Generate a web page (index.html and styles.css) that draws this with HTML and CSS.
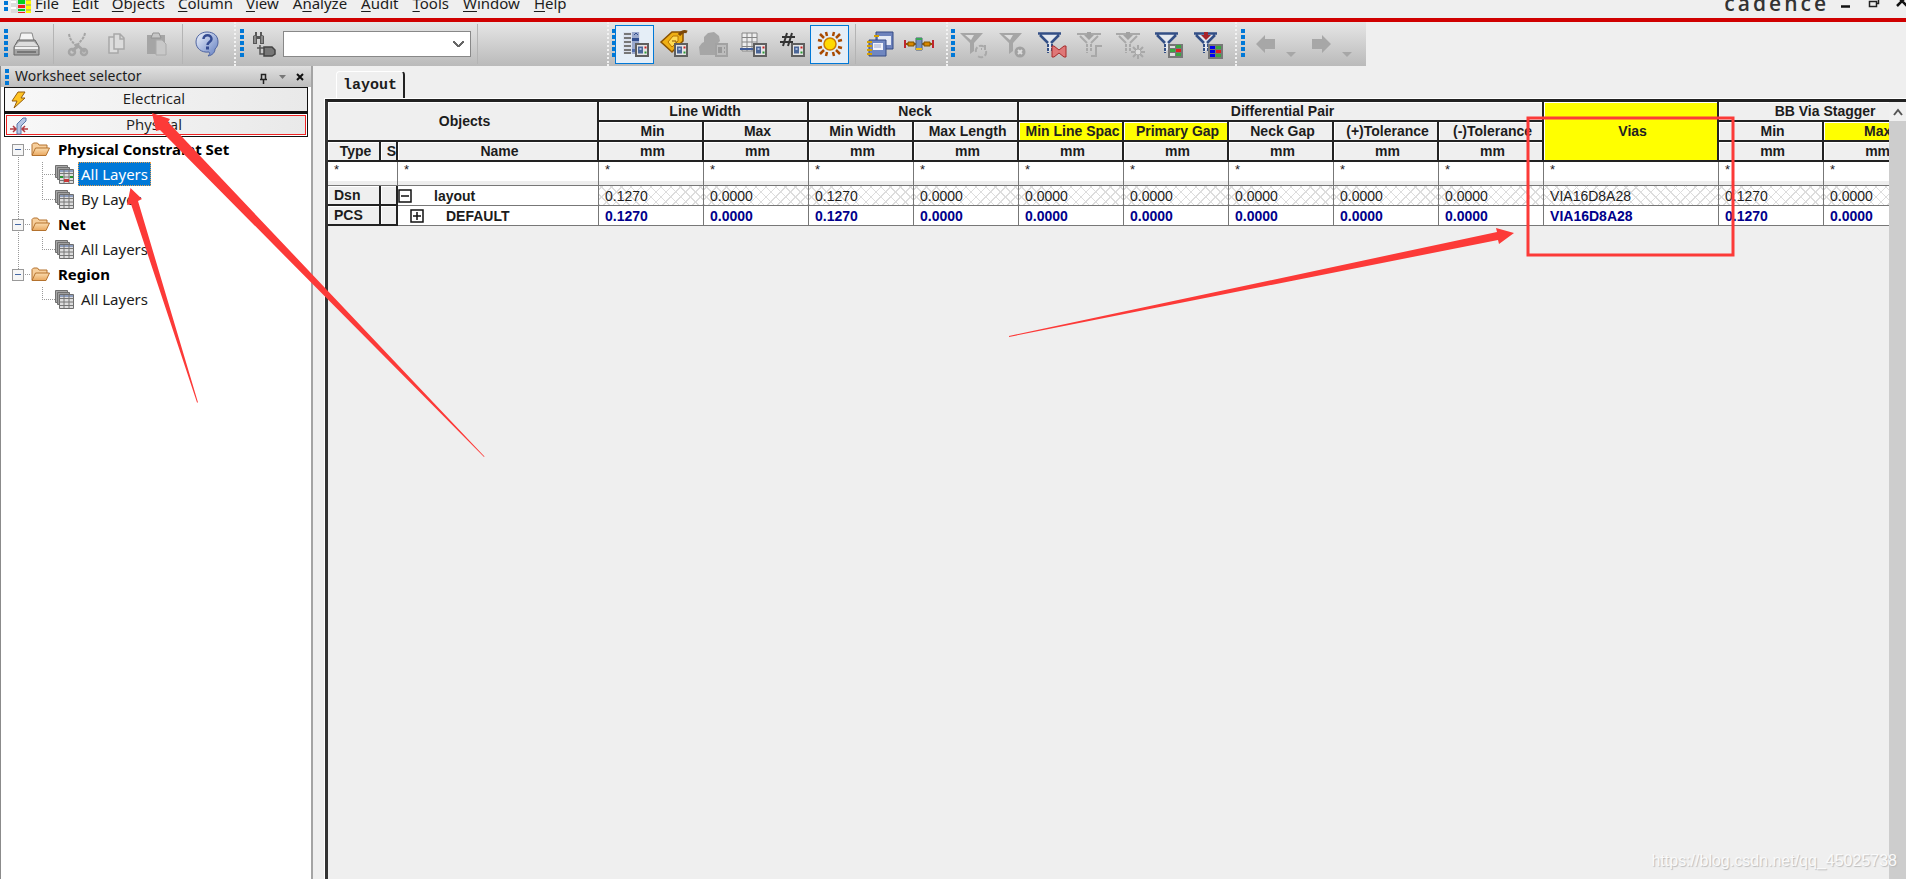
FILE: index.html
```html
<!DOCTYPE html>
<html lang="en">
<head>
<meta charset="utf-8">
<title>Constraint Manager</title>
<link rel="stylesheet" href="styles.css">
</head>
<body>
<svg class="defs" aria-hidden="true">
  <defs>
    <linearGradient id="sheetBlue" x1="0" y1="0" x2="1" y2="1"><stop offset="0" stop-color="#f3f6fd"/><stop offset="1" stop-color="#5f7cc0"/></linearGradient>
    <linearGradient id="folderFill" x1="0" y1="0" x2="0" y2="1"><stop offset="0" stop-color="#fbdcae"/><stop offset="1" stop-color="#e9a860"/></linearGradient>
    <symbol id="folder" viewBox="0 0 19 15"><path d="M1 13V2.500l1.500-1.500h4l1.500 2h8v3" fill="#f7cf9c" stroke="#b4722e"/><path d="M1 13.500L4.500 6h14L15 13.500z" fill="url(#folderFill)" stroke="#b4722e"/></symbol>
    <symbol id="sheets" viewBox="0 0 19 19"><path d="M.5.5h12v12H.5z" fill="#a8a8a8" stroke="#707070"/><path d="M2.500 2.500h12v12h-12z" fill="#a0a0a0" stroke="#707070"/><path d="M4.500 4.500h14v14h-14z" fill="#ddd" stroke="#6d6d6d"/><path d="M5 5h13v2H5z" fill="#8d9dbd"/><path d="M4.500 8.500h14m-14 3.500h14m-14 3.500h14M9 5v13M14 5v13" stroke="#777" fill="none"/></symbol>
    <symbol id="badge" viewBox="0 0 14 14"><path d="M1 1h12v12H1z" fill="#e4e4e4" stroke="#5f5f5f" stroke-width="2"/><path d="M3 3.500h5v7H3z" fill="#4b6799"/><path d="M4.500 5h2v2h-2z" fill="#a9bbdc"/><path d="M9.500 3.500h2v2h-2z" fill="#c22"/><path d="M9.500 8.500h2v2h-2z" fill="#2b9b35"/></symbol>
    <symbol id="funnel" viewBox="0 0 24 22"><path d="M0 1h23L14 11v8l-4 3V11z" fill="#a6a6a6"/><path d="M5 3h9l-3 5z" fill="#dedede"/></symbol>
    <symbol id="funnelBlue" viewBox="0 0 24 22"><path d="M1.500 1.500h21l-8.500 9v6l-4 4v-10z" fill="#e4e8ef"/><path d="M0 1.500h23M2 3l8 8M21 3l-8 8" stroke="#334f86" stroke-width="2.500" fill="none"/><path d="M10 12v9m4-9v7" stroke="#334f86" stroke-width="2" stroke-dasharray="3 1"/></symbol>
    <symbol id="funnelPale" viewBox="0 0 24 22"><path d="M0 2h24M3 4l7 7M21 4l-7 7" stroke="#a9a9a9" stroke-width="2" fill="none"/><path d="M10 12v9m4-9v7" stroke="#a9a9a9" stroke-width="2" stroke-dasharray="3 1"/><path d="M10 0h4v3h3l-5 5-5-5h3z" fill="#a2a2a2"/></symbol>
  </defs>
</svg>

<header class="menubar">
  <span class="grip"></span>
  <svg class="app-icon" width="22" height="20" viewBox="0 0 22 20"><path d="M2 0h20v20H2z" fill="#ddd"/><path d="M2 2h5v2H2zm0 6h5v2H2zm0 6h5v2H2z" fill="#fff"/><path d="M9 0h7v20H9z" fill="#ddd"/><path d="M9 3h7v3H9z" fill="#f02020"/><path d="M9 7h7v4H9z" fill="#00d020"/><path d="M9 12h7v3H9z" fill="#f02020"/><path d="M9 16h7v2H9z" fill="#00d020"/><path d="M9 19h7v1H9z" fill="#f02020"/><path d="M17 0h5v20h-5z" fill="#ff0"/><path d="M17 7h5m-5 5h5m-5 5h5" stroke="#998"/></svg>
  <nav class="menus">
    <a href="#"><u>F</u>ile</a><a href="#"><u>E</u>dit</a><a href="#"><u>O</u>bjects</a><a href="#"><u>C</u>olumn</a><a href="#"><u>V</u>iew</a><a href="#">A<u>n</u>alyze</a><a href="#"><u>A</u>udit</a><a href="#"><u>T</u>ools</a><a href="#"><u>W</u>indow</a><a href="#"><u>H</u>elp</a>
  </nav>
  <span class="brand">cadence</span>
  <div class="window-controls">
    <button aria-label="Minimize"><svg width="12" height="12"><path d="M1 10.500h9" stroke="#111" stroke-width="2.500"/></svg></button>
    <button aria-label="Restore"><svg width="12" height="12"><path d="M1.500 5.500h7v5h-7zM3.500 4V1.500h7v6H9" stroke="#222" stroke-width="1.500" fill="none"/></svg></button>
    <button aria-label="Close"><svg width="12" height="12"><path d="M1 0l10 10M11 0L1 10" stroke="#111" stroke-width="2.500"/></svg></button>
  </div>
</header>

<div class="toolbars">
  <div class="toolbar edit-bar">
    <span class="grip"></span>
    <button class="print" aria-label="Print"><svg width="28" height="28"><path d="M7 11l2-8h11l2 8z" fill="#f4f4f4" stroke="#888"/><path d="M2 17l4-7h17l4 7v8H2z" fill="#a4a4a4" stroke="#666"/><path d="M3 16l4-4h15l4 4z" fill="#ddd"/><path d="M3 17h23v2H3z" fill="#f1f1f1"/><path d="M5 21h19v2H5z" fill="#777"/></svg></button>
    <span class="sep"></span>
    <button aria-label="Cut"><svg width="28" height="28" fill="none" stroke="#a5a5a5"><path d="M5 4c1 7 5 9 9 14M21 3c-1 6-5 8-8 13" stroke-width="2" stroke-dasharray="3 1"/><path d="M12 14l9 8M14 16l-6 5" stroke-width="3"/><circle cx="8" cy="22" r="3" stroke-width="2.500"/><circle cx="20" cy="22" r="3" stroke-width="2.500"/></svg></button>
    <button aria-label="Copy"><svg width="28" height="28" fill="#dcdcdc" stroke="#a8a8a8" stroke-width="1.500"><path d="M6 7h9v16H6z"/><path d="M11 4h6l4 4v11H11zM17 4v5h4"/></svg></button>
    <button aria-label="Paste"><svg width="28" height="28"><path d="M5 5h18v19H5z" fill="#a5a5a5"/><path d="M9 8l2-5h6l2 5z" fill="#c6c6c6" stroke="#929292"/><path d="M14 10h6l4 4v11H14z" fill="#c8c8c8" stroke="#aaa"/></svg></button>
    <span class="sep"></span>
    <button class="help" aria-label="Help"><svg width="28" height="28"><path d="M14 2c7 0 11 4 11 10 0 3-1 5-3 7 0 3-2 6-7 7 2-2 2-3 1-4C8 23 3 18 3 12 3 6 8 2 14 2z" fill="url(#sheetBlue)" stroke="#4d63a0"/><path d="M10.500 9c0-5 8-5 8 0 0 3-4 3-4 6" fill="none" stroke="#344b91" stroke-width="2.500"/><path d="M13 16.500h3v3h-3z" fill="#344b91"/></svg></button>
  </div>
  <div class="toolbar search-bar">
    <span class="grip"></span>
    <button aria-label="Find"><svg width="28" height="28"><path d="M3 14V6l2-1V2h2v4h3V2h2v3l2 1v8h-4V9H7v5z" fill="#585858"/><path d="M5 6v7m7-7v7" stroke="#bbb"/><path d="M7 18h8m-5-3v9h5" stroke="#555" fill="none" stroke-width="1.500"/><path d="M14 17h8l3 3v4l-3 2h-8z" fill="#777" stroke="#444" stroke-width="1.500"/></svg></button>
    <select class="find" aria-label="Find object"><option></option></select>
    <span class="sep"></span>
  </div>
  <div class="toolbar view-bar">
    <span class="grip"></span>
    <button class="on" aria-label="Worksheet selector"><svg width="30" height="30"><path d="M3 3h17v22H3z" fill="#dce2ee"/><path d="M4 5h7m-7 4h7m-7 4h7m-7 4h7m-7 4h7m-7 3h7" stroke="#777" stroke-width="2"/><path d="M12 3h7v22h-7z" fill="#9aa9cc"/><path d="M12 9h7v3h-7z" fill="#334f8f"/><path d="M12 20h7v3h-7z" fill="#5570ac"/><path d="M14 6l2-2 2 2" stroke="#334f8f" fill="none"/><use href="#badge" x="15" y="14" width="14" height="14"/></svg></button>
    <button aria-label="Tags"><svg width="30" height="30"><path d="M2 13L13 3h11v9L13 23z" fill="#efaf14" stroke="#8a5200" stroke-width="1.500"/><path d="M9 13l5-6h5v5l-6 6z" fill="#ffdb54" stroke="#b87400"/><path d="M13 12h4v3" stroke="#8a5200" fill="none"/><path d="M20 6q4-5 8-3" stroke="#7c4809" stroke-width="3" fill="none"/><use href="#badge" x="15" y="14" width="14" height="14"/></svg></button>
    <button aria-label="Objects"><svg width="30" height="30"><path d="M10 4l6-1 5 4 1 5-4 4 1 10H2l-1-8 3-4 2-1V8z" fill="#a6a6a6"/><path d="M18 15h11v12H18z" fill="#bdbdbd" stroke="#a2a2a2" stroke-width="2"/><path d="M20 18h4v6h-4zm6 0h1v2h-1zm0 4h1v2h-1z" fill="#999"/></svg></button>
    <button aria-label="Columns"><svg width="30" height="30"><path d="M5 4h15v18H5z" fill="#eee" stroke="#888"/><path d="M5 8.500h15M5 13h15M5 17.500h15M10 4v18m5-18v18" stroke="#858585"/><path d="M3 20h14" stroke="#415c98" stroke-width="2"/><use href="#badge" x="16" y="14" width="14" height="14"/></svg></button>
    <button aria-label="Numbers"><svg width="30" height="30"><path d="M11 4L7 17M16 4l-4 13M6 8h13M4 13h13" stroke="#333" stroke-width="2"/><use href="#badge" x="15" y="14" width="14" height="14"/></svg></button>
    <button class="on" aria-label="Highlight"><svg width="30" height="30"><path d="M11 3l1 4m7-4l-1 4M11 27l1-4m7 4l-1-4M3 11l4 1m-4 7l4-1M27 11l-4 1m4 7l-4-1M5 5l4 4m12 12l4 4M25 5l-4 4M9 21l-4 4" stroke="#a94b00" stroke-width="2.500"/><circle cx="15" cy="15" r="6" fill="#ffd900" stroke="#cb7a00" stroke-width="1.500"/></svg></button>
    <span class="sep"></span>
    <button aria-label="Cascade"><svg width="30" height="30"><path d="M11 3h17v17H11z" fill="#6e83bd" stroke="#344b85"/><path d="M13 7h13v9H13z" fill="#e5eaf6"/><path d="M4 11h17v16H4z" fill="#7087c0" stroke="#344b85"/><path d="M8 14h10v7H8z" fill="#f1f3fa"/><path d="M9 16h7m-7 2h7" stroke="#a0acce"/><path d="M2 13h5m-5 4h5m-5 4h5m-5 4h5M9 7h5" stroke="#d5a000" stroke-width="2"/></svg></button>
    <button aria-label="Net"><svg width="32" height="28"><path d="M1 14h30" stroke="#955700" stroke-width="2"/><path d="M2 10v8m28-8v8" stroke="#be2630" stroke-width="2"/><path d="M5 12h6v4H5zm16 0h6v4h-6z" fill="#d88700" stroke="#7c5000"/><path d="M13 8h6v12h-6z" fill="#748ebe" stroke="#475974"/><path d="M13 8h6v2h-6z" fill="#38a755"/><path d="M13 18h6v2h-6z" fill="#ebbb18"/></svg></button>
  </div>
  <div class="toolbar filter-bar">
    <span class="grip"></span>
    <button aria-label="Filter refresh"><svg width="30" height="30"><use href="#funnel" x="1" y="3" width="24" height="22"/><path d="M17 23a5 5 0 0 1 9-4m1 3a5 5 0 0 1-9 4m8-10v4h-4" stroke="#a9a9a9" stroke-width="2" fill="none" stroke-dasharray="5 2"/></svg></button>
    <button aria-label="Filter remove"><svg width="30" height="30"><use href="#funnel" x="1" y="3" width="24" height="22"/><circle cx="22" cy="23" r="5.500" fill="#a1a1a1"/><path d="M20 21l4 4m0-4l-4 4" stroke="#ddd" stroke-width="2"/></svg></button>
    <button aria-label="Clear filters"><svg width="30" height="30"><use href="#funnelBlue" x="1" y="3" width="24" height="22"/><path d="M15 17h2l5 4 5-4h2v11h-2l-5-4-5 4h-2z" fill="#df7777" stroke="#a52a2a"/></svg></button>
    <button aria-label="Filter path"><svg width="30" height="30"><use href="#funnelPale" x="1" y="3" width="24" height="22"/><path d="M15 27h5V17h6" fill="none" stroke="#a8a8a8" stroke-width="2"/></svg></button>
    <button aria-label="Filter settings"><svg width="30" height="30"><use href="#funnelPale" x="1" y="3" width="24" height="22"/><path d="M16 23h14M23 16v14M18 18l10 10m0-10L18 28" stroke="#a8a8a8" stroke-width="2"/><circle cx="23" cy="23" r="3" fill="#ddd" stroke="#a8a8a8"/></svg></button>
    <button aria-label="Filter rows"><svg width="30" height="30"><use href="#funnelBlue" x="1" y="3" width="24" height="22"/><path d="M15 16h13v12H15z" fill="#ddd" stroke="#777" stroke-width="2"/><path d="M16 20h5v3h-5zm6-4h5v4h-5zm0 8h5v3h-5z" fill="#3aa740"/><path d="M22 20h5v3h-5z" fill="#df2020"/><path d="M15 19.500h13m-13 4h13M21.500 16v12" stroke="#777"/></svg></button>
    <button aria-label="Filter columns"><svg width="30" height="30"><use href="#funnelBlue" x="1" y="3" width="24" height="22"/><path d="M11 3h4v3h3l-5 5-5-5h3z" fill="#a8242b"/><path d="M16 16h13v13H16z" fill="#3aa740" stroke="#777" stroke-width="2"/><path d="M17 17h5v11h-5z" fill="#00e"/><path d="M23 21h5v3h-5z" fill="#df2020"/><path d="M16 20.500h13m-13 4h13M22.500 16v13" stroke="#777"/></svg></button>
  </div>
  <div class="toolbar nav-bar">
    <span class="grip"></span>
    <button aria-label="Back"><svg width="44" height="30"><path d="M3 15l9-9v4h10v10H12v4z" fill="#a7a7a7"/><path d="M33 23h10l-5 5z" fill="#a7a7a7"/></svg></button>
    <button aria-label="Forward"><svg width="44" height="30"><path d="M22 15l-9-9v4H3v10h10v4z" fill="#a7a7a7"/><path d="M33 23h10l-5 5z" fill="#a7a7a7"/></svg></button>
  </div>
</div>

<div class="workspace">
  <aside class="sidebar">
    <div class="pane-title">
      <span class="grip"></span><h2>Worksheet selector</h2>
      <button aria-label="Pin"><svg width="12" height="14"><path d="M3.500 9V4.500h4V9M2 9.500h7M5.500 10v4" stroke="#222" stroke-width="1.500" fill="none"/></svg></button>
      <button aria-label="Options"><svg width="12" height="14"><path d="M3 5h7l-3.500 4z" fill="#777"/></svg></button>
      <button aria-label="Close pane"><svg width="12" height="14"><path d="M3 4l6 6m0-6l-6 6" stroke="#111" stroke-width="2"/></svg></button>
    </div>
    <button class="domain"><svg width="18" height="18"><path d="M8 1h7l-4 6h4L4 17l3-7H2z" fill="#ffc423" stroke="#945d10"/></svg><span>Electrical</span></button>
    <button class="domain current"><svg width="18" height="18"><path d="M7 17V7l6-6h3v3l-5 5v8z" fill="#b5c5e3" stroke="#5b77a7"/><path d="M0 12h6m12 0h-6M3 9l3 3-3 3m12-6l-3 3 3 3" stroke="#b33b42" stroke-width="1.500" fill="none"/></svg><span>Physical</span></button>
    <ul class="tree">
      <li><div class="node group"><button class="toggle" aria-label="Collapse"></button><i></i><svg width="19" height="15"><use href="#folder"/></svg><span>Physical Constraint Set</span></div>
        <ul><li class="node leaf"><svg width="19" height="19"><use href="#sheets"/><path d="M5 11h3v2H5zm10 0h3v2h-3z" fill="#289530"/><path d="M9 14h5v3H9z" fill="#c63838"/></svg><a class="selected" href="#">All Layers</a></li><li class="node leaf"><svg width="19" height="19"><use href="#sheets"/></svg><a href="#">By Layer</a></li></ul></li>
      <li><div class="node group"><button class="toggle" aria-label="Collapse"></button><i></i><svg width="19" height="15"><use href="#folder"/></svg><span>Net</span></div>
        <ul><li class="node leaf"><svg width="19" height="19"><use href="#sheets"/></svg><a href="#">All Layers</a></li></ul></li>
      <li><div class="node group"><button class="toggle" aria-label="Collapse"></button><i></i><svg width="19" height="15"><use href="#folder"/></svg><span>Region</span></div>
        <ul><li class="node leaf"><svg width="19" height="19"><use href="#sheets"/></svg><a href="#">All Layers</a></li></ul></li>
    </ul>
  </aside>

  <main class="content">
    <button class="tab">layout</button>
    <div class="sheet">
      <div class="grid-view">
        <table>
          <colgroup><col class="c-type"><col class="c-s"><col class="c-name"><col span="9" class="c-num"><col class="c-via"><col span="2" class="c-num"></colgroup>
          <thead>
            <tr><th colspan="3" rowspan="2">Objects</th><th colspan="2">Line Width</th><th colspan="2">Neck</th><th colspan="5">Differential Pair</th><th rowspan="3" class="hot">Vias</th><th colspan="2">BB Via Stagger</th></tr>
            <tr><th>Min</th><th>Max</th><th>Min Width</th><th>Max Length</th><th class="hot">Min Line Spac</th><th class="hot">Primary Gap</th><th>Neck Gap</th><th>(+)Tolerance</th><th>(-)Tolerance</th><th>Min</th><th class="hot">Max</th></tr>
            <tr><th>Type</th><th class="s">S</th><th>Name</th><th>mm</th><th>mm</th><th>mm</th><th>mm</th><th>mm</th><th>mm</th><th>mm</th><th>mm</th><th>mm</th><th>mm</th><th>mm</th></tr>
          </thead>
          <tbody>
            <tr class="filters"><td colspan="2">*</td><td>*</td><td>*</td><td>*</td><td>*</td><td>*</td><td>*</td><td>*</td><td>*</td><td>*</td><td>*</td><td>*</td><td>*</td><td>*</td></tr>
            <tr class="design"><th class="row-type">Dsn</th><th></th><td class="name"><div><button class="box" aria-label="Collapse layout"><svg width="14" height="14"><path d="M1 1h12v12H1zM3 7h8" fill="none" stroke="#111" stroke-width="1.500"/></svg></button><span>layout</span></div></td><td>0.1270</td><td>0.0000</td><td>0.1270</td><td>0.0000</td><td>0.0000</td><td>0.0000</td><td>0.0000</td><td>0.0000</td><td>0.0000</td><td>VIA16D8A28</td><td>0.1270</td><td>0.0000</td></tr>
            <tr class="cset"><th class="row-type">PCS</th><th></th><td class="name child"><div><button class="box" aria-label="Expand DEFAULT"><svg width="14" height="14"><path d="M1 1h12v12H1zM3 7h8M7 3v8" fill="none" stroke="#111" stroke-width="1.500"/></svg></button><span>DEFAULT</span></div></td><td>0.1270</td><td>0.0000</td><td>0.1270</td><td>0.0000</td><td>0.0000</td><td>0.0000</td><td>0.0000</td><td>0.0000</td><td>0.0000</td><td>VIA16D8A28</td><td>0.1270</td><td>0.0000</td></tr>
          </tbody>
        </table>
      </div>
      <div class="scrollbar"><button aria-label="Scroll up"><svg width="12" height="10"><path d="M2 8l4-5 4 5" fill="none" stroke="#555" stroke-width="2"/></svg></button></div>
    </div>
  </main>
</div>

<svg class="annotations" aria-hidden="true">
  <g fill="#fc3a38">
    <path d="M152 113l18 6-2 3L484.500 456.500l-.500.500L160 130l-4 1z"/>
    <path d="M130.500 188l11.500 11-4 2 60 201.500h-1L131 204l-4 1z"/>
    <path d="M1514 233l-15 11-1-4-489 97v-1l488-104-1-4z"/>
  </g>
  <rect x="1528" y="118" width="205" height="137" fill="none" stroke="#fc3a38" stroke-width="3"/>
</svg>
<div class="watermark">https://blog.csdn.net/qq_45025738</div>
</body>
</html>
```
FILE: styles.css
```css
* { box-sizing: border-box; }
body {
  margin: 0;
  height: 100vh;
  overflow: hidden;
  position: relative;
  display: flex;
  flex-direction: column;
  background: #efefef;
  color: #1c1c1c;
  font-family: "Noto Sans", "Open Sans", sans-serif;
  font-size: 15px;
}
button { margin: 0; padding: 0; border: 0; background: none; font: inherit; color: inherit; display: flex; align-items: center; justify-content: center; }
a { color: inherit; text-decoration: none; }
ul { list-style: none; margin: 0; padding: 0; }
svg { display: block; flex: none; }
.defs { position: absolute; width: 0; height: 0; }
.grip {
  width: 4px;
  height: 30px;
  flex: none;
  background: repeating-linear-gradient(#0078d7 0 4px, transparent 4px 6px);
}

.menubar {
  flex: none;
  height: 22px;
  display: flex;
  align-items: flex-end;
  overflow: hidden;
  padding: 0 0 5px 4px;
  border-bottom: 4px solid #d00000;
}
.menubar > .grip { height: 18px; }
.app-icon { margin: 0 4px 0 1px; }
.menus { display: flex; gap: 13px; line-height: 20px; flex: 1; }
.menus a:nth-child(n+6) { margin-left: 1px; }
.menus u { text-underline-offset: 2px; }
.brand { font-family: "Open Sans", sans-serif; font-weight: 600; font-size: 21px; line-height: 20px; letter-spacing: 3px; color: #333; margin-right: 11px; }
.window-controls { display: flex; gap: 16px; margin: 0 -2px 5px 0; }

.toolbars { flex: none; display: flex; height: 44px; align-self: flex-start; }
.toolbar {
  display: flex;
  align-items: center;
  padding-left: 4px;
  background: linear-gradient(#e6e6e6, #bababa);
  border-right: 2px dotted #f2f2f2;
}
.toolbar .sep { width: 1px; height: 40px; background: #b4b4b4; }
.edit-bar { width: 236px; }
.edit-bar button { width: 39px; }
.edit-bar .print { width: 36px; margin-right: 9px; }
.edit-bar .sep + button { margin-left: 4px; }
.edit-bar .sep:nth-last-child(2) { margin-left: 7px; }
.search-bar { width: 373px; }
.search-bar button { width: 39px; }
.search-bar .sep { margin-left: 6px; }
.find {
  width: 188px;
  height: 26px;
  border: 1px solid #888;
  border-radius: 0;
  appearance: none;
  background:
    linear-gradient(45deg, transparent 40%, #666 40% 60%, transparent 60%) right 11px center / 6px 6px no-repeat,
    linear-gradient(-45deg, transparent 40%, #666 40% 60%, transparent 60%) right 6px center / 6px 6px no-repeat,
    #fff;
}
.view-bar { width: 339px; padding-left: 3px; }
.view-bar button { width: 39px; height: 39px; }
.view-bar .grip { margin-right: -1px; }
.view-bar .on { background: #e5eef7; border: 1px solid #0078d7; }
.view-bar .sep { margin: 0 4px 0 6px; }
.filter-bar { width: 289px; padding-left: 3px; }
.filter-bar button { width: 39px; }
.filter-bar .grip { margin-right: -1px; }
.nav-bar { width: 129px; border-right: 0; }
.nav-bar button { width: 56px; }
.nav-bar .grip { margin-right: 2px; }

.workspace { flex: 1; min-height: 0; display: flex; }
.sidebar { width: 313px; flex: none; background: #fff; border-left: 1px solid #8b8b8b; border-right: 2px solid #a4a4a4; padding: 0 3px; }
.pane-title { display: flex; align-items: center; height: 21px; margin: 0 -3px; padding: 0 2px 0 4px; background: linear-gradient(#e0e0e0, #bdbdbd); }
.pane-title .grip { height: 16px; }
.pane-title h2 { flex: 1; margin: 0 0 2px 6px; font-size: 14px; line-height: 18px; font-weight: 400; }
.pane-title button { width: 18px; }
.domain {
  position: relative;
  width: 100%;
  height: 25px;
  padding: 0 4px 3px 0;
  border: 1px solid #111;
  background: linear-gradient(90deg, #f8f8f8, #e9e9e9);
  font-family: "Open Sans", sans-serif;
}
.domain svg { position: absolute; left: 5px; top: 3px; }
.domain.current { border-top-width: 2px; box-shadow: inset 0 0 0 1px #fff, inset 0 0 0 2px #e22; }
.node { display: flex; align-items: center; height: 25px; }
.group { font-weight: 700; color: #000; padding-left: 8px; }
.toggle { width: 12px; height: 12px; border: 1px solid #999; background: linear-gradient(#4568a5, #4568a5) center / 6px 1px no-repeat, #f6f6f6; }
.group i { width: 7px; height: 1px; background: repeating-linear-gradient(90deg, transparent 0 1px, #999 1px 2px); }
.group svg { margin-right: 8px; }
.group span, .leaf a { margin-bottom: 2px; }
.tree > li { background: repeating-linear-gradient(#999 0 1px, transparent 1px 2px) 14px 0 / 1px 100% no-repeat; }
.tree > li:first-child { background-position: 14px 12px; }
.tree > li:last-child { background-size: 1px 12px; }
.leaf { padding-left: 51px; background: repeating-linear-gradient(90deg, #999 0 1px, transparent 1px 2px) 38px 12px / 13px 1px no-repeat, repeating-linear-gradient(#999 0 1px, transparent 1px 2px) 38px 0 / 1px 100% no-repeat; }
.leaf:last-child { background-size: 13px 1px, 1px 12px; }
.leaf a { margin-left: 4px; padding: 0 2px; line-height: 22px; border: 1px solid transparent; }
.leaf .selected { background: #0078d7; color: #fff; border: 1px dotted #e6a050; }

.content { flex: 1; min-width: 0; display: flex; flex-direction: column; padding: 5px 0 0 12px; }
.tab {
  align-self: flex-start;
  margin: 0 0 1px 11px;
  width: 69px;
  height: 27px;
  border: 1px solid #fff;
  border-right: 2px solid #222;
  border-bottom: 0;
  border-radius: 4px 4px 0 0;
  font: 700 15px "Liberation Mono", monospace;
}
.sheet { flex: 1; min-height: 0; display: flex; border-top: 3px solid #222; border-left: 3px solid #333; outline: 1px solid #fff; }
.grid-view { flex: 1; min-width: 0; overflow: hidden; }
.scrollbar { width: 17px; flex: none; background: #cdcdcd; }
.scrollbar button { width: 100%; height: 19px; background: #f0f0f0; }
table { table-layout: fixed; width: 1601px; border-collapse: separate; border-spacing: 0; font-family: "Liberation Sans", Arial, sans-serif; font-size: 14px; line-height: 16px; }
.c-type { width: 53px; }
.c-s { width: 17px; }
.c-name { width: 201px; }
.c-num { width: 105px; }
.c-via { width: 175px; }
th, td { padding: 0; height: 20px; white-space: nowrap; overflow: hidden; }
th { padding-left: 4px; background: #efefef; font-weight: 700; border: solid #222; border-width: 0 2px 2px 0; box-shadow: inset 1px 1px #fff; }
th.hot { background: #ff0; color: #222; }
th.s { text-align: right; }
th.row-type { text-align: left; padding-left: 6px; }
td { background: #fff; padding-left: 6px; border: solid #777; border-width: 0 1px 1px 0; }
.filters td { height: 24px; vertical-align: top; box-shadow: inset 0 -4px #eee; font-size: 13px; }
.design td:not(.name) { background: repeating-linear-gradient(45deg, #ddd 0 1px, transparent 1px 7px), repeating-linear-gradient(-45deg, #ddd 0 1px, transparent 1px 7px), #fff; }
.cset td { color: #00008b; font-weight: 700; }
td.name { padding-left: 0; color: #1c1c1c; font-weight: 700; }
.name div { display: flex; align-items: center; gap: 22px; }
.name.child div { padding-left: 12px; }

.annotations { position: absolute; top: 0; left: 0; width: 100%; height: 100%; pointer-events: none; }
.watermark { position: absolute; right: 9px; bottom: 7px; font: 16px/22px "Liberation Sans", Arial, sans-serif; color: #fafafa; text-shadow: 1px 1px 1px #bbb; }
```
